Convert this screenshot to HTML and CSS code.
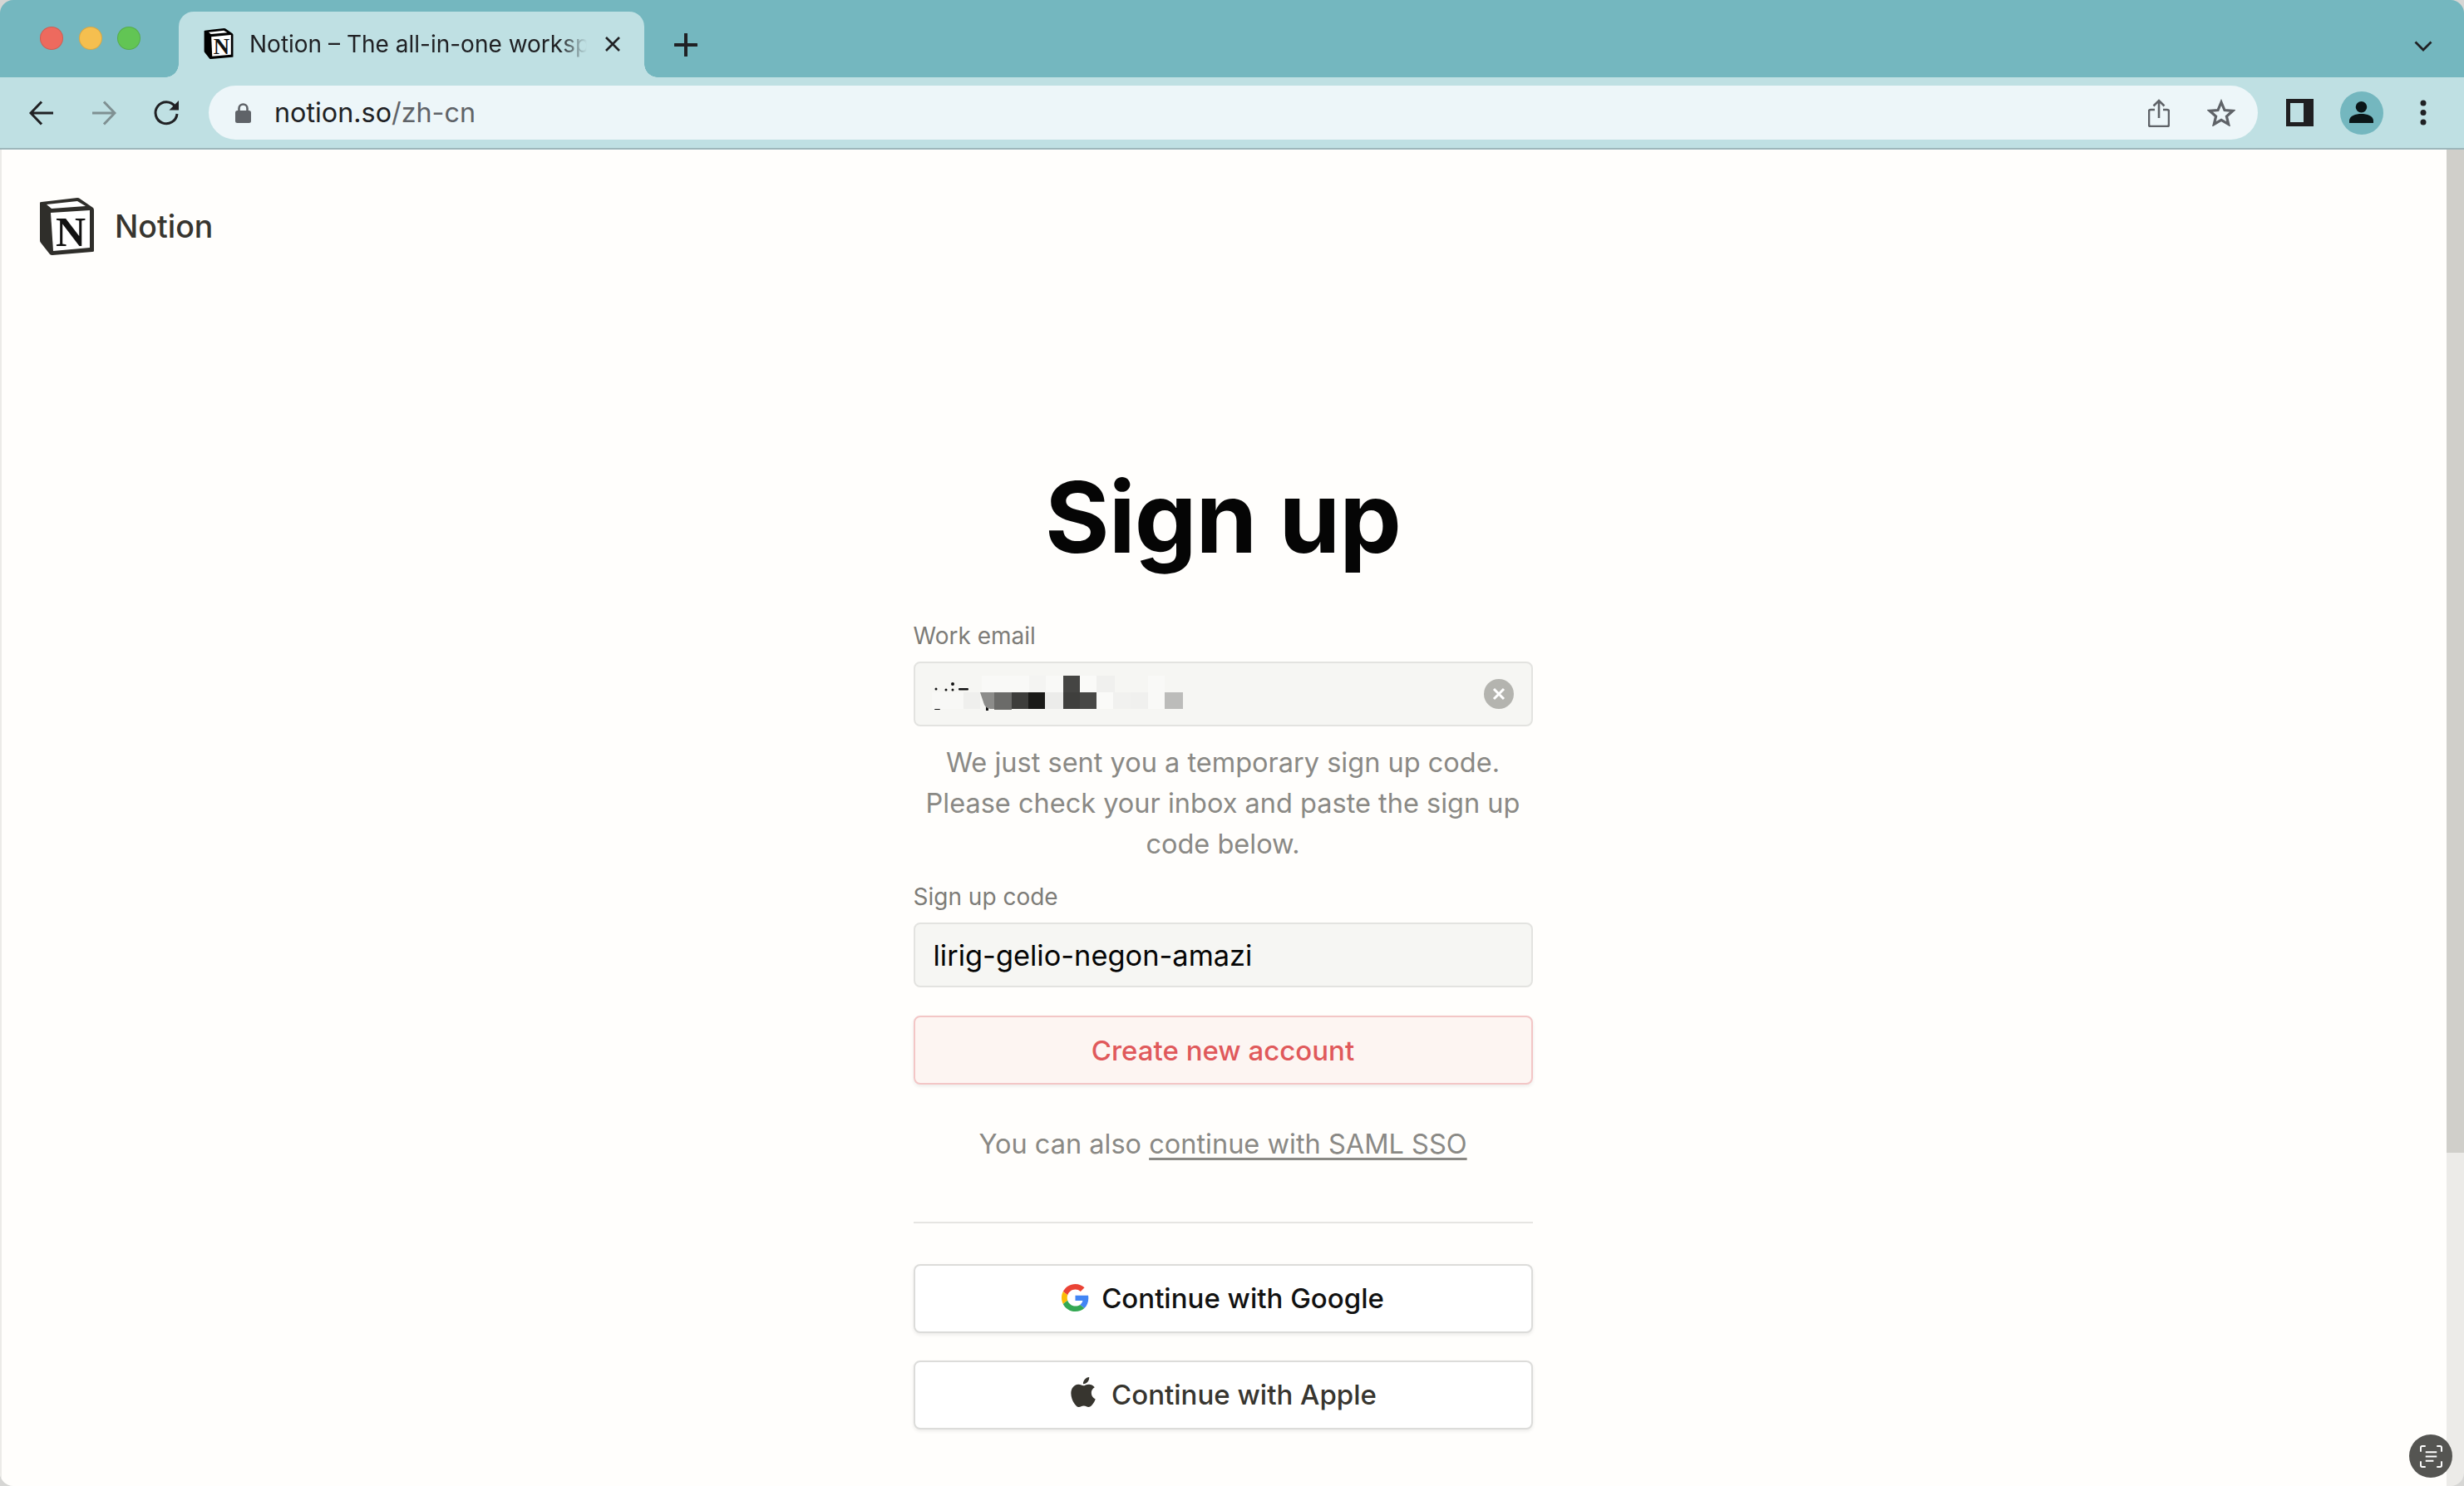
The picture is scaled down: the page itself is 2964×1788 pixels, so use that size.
FILE: index.html
```html
<!DOCTYPE html>
<html lang="en">
<head>
<meta charset="utf-8">
<title>Notion – The all-in-one workspace</title>
<link rel="stylesheet" href="styles.css">
</head>
<body>
<div class="window">
  <header class="tabstrip">
    <div class="lights">
      <span class="light red"></span><span class="light yellow"></span><span class="light green"></span>
    </div>
    <div class="tab">
      <svg class="favicon" viewBox="0 0 67 69">
        <path d="M2 6 Q2 5 4 5 L47 0 Q49 0 50 1 L66 12 Q67 13 67 15 L67 64 Q67 65 65 65 L17 69 Q15 69 14 68 L3 54 Q2 53 2 51 Z" fill="#000"/>
        <path d="M12 9 L46 5 L54 10 L17 13 Z" fill="#fff"/>
        <path d="M18 19 L62 15 L62 59 L20 63 Z" fill="#fff"/>
        <text x="41" y="57" text-anchor="middle" class="logo-n">N</text>
      </svg>
      <span class="tab-title">Notion – The all-in-one worksp</span>
      <svg class="tab-close" viewBox="0 0 20 20"><path d="M2 2 L18 18 M18 2 L2 18" stroke="#202124" stroke-width="2.6" fill="none"/></svg>
    </div>
    <svg class="new-tab" viewBox="0 0 28 28"><path d="M14 1 V27 M1 14 H27" stroke="#202124" stroke-width="4" stroke-linecap="round" fill="none"/></svg>
    <svg class="tab-menu" viewBox="0 0 22 13"><path d="M1.5 1.5 L11 11 L20.500 1.500" stroke="#202124" stroke-width="2.800" fill="none"/></svg>
  </header>

  <nav class="toolbar">
    <span class="tool"><svg class="icon-30" viewBox="0 0 30 30"><path d="M29 15 H3 M15 1.500 L2 15 L15 28.500" stroke="#202124" stroke-width="3" fill="none"/></svg></span>
    <span class="tool"><svg class="icon-30" viewBox="0 0 30 30"><path d="M1 15 H27 M15 1.500 L28 15 L15 28.500" stroke="#7f9092" stroke-width="3" fill="none"/></svg></span>
    <span class="tool"><svg class="icon-32" viewBox="0 0 32 32"><path d="M26.500 8 A13 13 0 1 0 29 17" stroke="#202124" stroke-width="3" fill="none"/><path d="M31 1 V12.500 H19.500 Z" fill="#202124"/></svg></span>
    <div class="omnibox">
      <svg class="lock" viewBox="0 0 19 24"><path d="M4.500 10 V6.500 a5 5 0 0 1 10 0 V10" stroke="#5f6368" stroke-width="2.600" fill="none"/><rect x="0" y="9" width="19" height="15" rx="2.500" fill="#5f6368"/></svg>
      <span class="url"><span class="url-host">notion.so</span>/zh-cn</span>
      <svg class="omni-share" viewBox="0 0 26 34"><path d="M8 13 H3 a2 2 0 0 0 -2 2 V31 a2 2 0 0 0 2 2 H23 a2 2 0 0 0 2 -2 V15 a2 2 0 0 0 -2 -2 H18" stroke="#5f6368" stroke-width="2.600" fill="none"/><path d="M13 23 V3 M6.500 8.500 L13 2 L19.500 8.500" stroke="#5f6368" stroke-width="2.600" fill="none"/></svg>
      <svg class="omni-star" viewBox="0 0 34 33"><path d="M17 4 L21 13.500 L31 14.300 L23.400 21 L25.700 30.500 L17 25.400 L8.300 30.500 L10.600 21 L3 14.300 L13 13.500 Z" stroke="#5f6368" stroke-width="3.200" stroke-linejoin="miter" fill="none"/></svg>
    </div>
    <div class="tools-right">
      <span class="tool-wide"><svg class="icon-33" viewBox="0 0 33 33"><rect width="33" height="33" fill="#1f1f21"/><rect x="5" y="5" width="16" height="23" fill="#bfe0e3"/></svg></span>
      <span class="avatar"><svg class="icon-avatar" viewBox="0 0 30 30"><circle cx="15" cy="8" r="7" fill="#0a1618"/><path d="M0 28 V25 C0 19 8 16.500 15 16.500 S30 19 30 25 V28 Z" fill="#0a1618"/></svg></span>
      <span class="tool-wide"><svg class="icon-dots" viewBox="0 0 8 31"><circle cx="4" cy="4" r="3.500" fill="#202124"/><circle cx="4" cy="15.500" r="3.500" fill="#202124"/><circle cx="4" cy="27" r="3.500" fill="#202124"/></svg></span>
    </div>
  </nav>

  <div class="viewport">
    <main class="page">
      <div class="brand">
        <svg class="brand-logo" viewBox="0 0 67 69">
          <path d="M2 6 Q2 5 4 5 L47 0 Q49 0 50 1 L66 12 Q67 13 67 15 L67 64 Q67 65 65 65 L17 69 Q15 69 14 68 L3 54 Q2 53 2 51 Z" fill="#2f2e2a"/>
          <path d="M10 8 L47 4 L57 10 L16 13 Z" fill="#fff"/>
          <path d="M15 18 L62 15 L62 60 L18 64 Z" fill="#fff"/>
          <text x="39" y="58" text-anchor="middle" class="logo-n">N</text>
        </svg>
        <span class="brand-name">Notion</span>
      </div>
      <section class="form">
        <h1 class="title">Sign up</h1>
        <label class="field-label">Work email</label>
        <div class="input">
          <svg class="mosaic" viewBox="0 0 340 70" aria-label="Redacted email address">
            <g fill="#111">
              <circle cx="25" cy="23" r="2"/><circle cx="5" cy="29" r="1.500"/><circle cx="17" cy="30" r="1.500"/><circle cx="25" cy="30" r="1.500"/><rect x="32" y="28" width="12" height="2.500" rx="1"/><rect x="3" y="52" width="7" height="2" rx="1"/><rect x="65" y="50" width="3" height="5"/>
            </g>
            <g>
              <rect x="60" y="13" width="57" height="20" fill="#f9f9f7"/>
              <rect x="117" y="13" width="20" height="20" fill="#f4f4f2"/>
              <rect x="137" y="13" width="21" height="20" fill="#f9f9f7"/>
              <rect x="158" y="13" width="20" height="20" fill="#454543"/>
              <rect x="178" y="13" width="20" height="20" fill="#fafaf8"/>
              <rect x="198" y="13" width="22" height="20" fill="#f0f0ee"/>
              <rect x="260" y="13" width="20" height="20" fill="#f9f9f7"/>
              <rect x="0" y="33" width="38" height="20" fill="#f8f8f6"/>
              <rect x="38" y="33" width="20" height="20" fill="#efefed"/>
              <path d="M58 33 H75 V53 H70 Q65 52 63 48 Z" fill="#8c8c8a"/>
              <rect x="75" y="33" width="21" height="21" fill="#6b6b69"/>
              <rect x="96" y="33" width="20" height="20" fill="#3d3d3b"/>
              <rect x="116" y="33" width="20" height="20" fill="#1a1a18"/>
              <rect x="136" y="33" width="22" height="20" fill="#ececea"/>
              <rect x="158" y="33" width="20" height="20" fill="#3f3f3d"/>
              <rect x="178" y="33" width="20" height="20" fill="#484846"/>
              <rect x="198" y="33" width="20" height="20" fill="#fafaf8"/>
              <rect x="218" y="33" width="22" height="20" fill="#f1f1ef"/>
              <rect x="240" y="33" width="20" height="20" fill="#f0f0ee"/>
              <rect x="260" y="33" width="20" height="20" fill="#f9f9f7"/>
              <rect x="280" y="33" width="22" height="20" fill="#bcbcba"/>
            </g>
          </svg>
          <svg class="clear" viewBox="0 0 36 36"><circle cx="18" cy="18" r="18" fill="#b4b4af"/><path d="M12 12 L24 24 M24 12 L12 24" stroke="#fff" stroke-width="3" fill="none"/></svg>
        </div>
        <p class="note">We just sent you a temporary sign up code. Please check your inbox and paste the sign up code below.</p>
        <label class="field-label">Sign up code</label>
        <div class="input"><span class="input-value">lirig-gelio-negon-amazi</span></div>
        <button class="btn btn-create">Create new account</button>
        <p class="sso">You can also <a class="sso-link">continue with SAML SSO</a></p>
        <hr class="divider">
        <button class="btn btn-social btn-google">
          <svg class="g-icon" viewBox="0 0 48 48">
            <path fill="#EA4335" d="M24 9.5c3.54 0 6.71 1.22 9.21 3.6l6.85-6.85C35.9 2.38 30.47 0 24 0 14.62 0 6.51 5.38 2.56 13.22l7.98 6.19C12.43 13.72 17.74 9.5 24 9.5z"/>
            <path fill="#4285F4" d="M46.98 24.55c0-1.57-.15-3.09-.38-4.55H24v9.02h12.94c-.58 2.96-2.26 5.48-4.78 7.18l7.73 6c4.51-4.18 7.09-10.36 7.09-17.65z"/>
            <path fill="#FBBC05" d="M10.53 28.59c-.48-1.45-.76-2.99-.76-4.59s.27-3.14.76-4.59l-7.98-6.19C.92 16.46 0 20.12 0 24c0 3.88.92 7.54 2.56 10.78l7.97-6.19z"/>
            <path fill="#34A853" d="M24 48c6.48 0 11.93-2.13 15.89-5.81l-7.73-6c-2.15 1.45-4.92 2.3-8.16 2.3-6.26 0-11.57-4.22-13.47-9.91l-7.98 6.19C6.51 42.62 14.62 48 24 48z"/>
          </svg>
          Continue with Google
        </button>
        <button class="btn btn-social btn-apple">
          <svg class="apple-icon" viewBox="2 0 20 24"><path fill="#37352f" d="M12.152 6.896c-.948 0-2.415-1.078-3.96-1.04-2.04.027-3.91 1.183-4.961 3.014-2.117 3.675-.546 9.103 1.519 12.09 1.013 1.454 2.208 3.09 3.792 3.039 1.52-.065 2.09-.987 3.935-.987 1.831 0 2.35.987 3.96.948 1.637-.026 2.676-1.48 3.676-2.948 1.156-1.688 1.636-3.325 1.662-3.415-.039-.013-3.182-1.221-3.22-4.857-.026-3.04 2.48-4.494 2.597-4.559-1.429-2.09-3.623-2.324-4.39-2.376-2-.156-3.675 1.09-4.61 1.09zM15.53 3.83c.843-1.012 1.4-2.427 1.245-3.83-1.207.052-2.662.805-3.532 1.818-.78.896-1.454 2.338-1.273 3.714 1.338.104 2.715-.688 3.559-1.701"/></svg>
          Continue with Apple
        </button>
      </section>
    </main>
    <div class="scrollbar"><div class="thumb"></div></div>
    <div class="scan">
      <svg class="scan-icon" viewBox="0 0 28 28">
        <path d="M1 8 V3 a2 2 0 0 1 2 -2 H7 M21 1 H25 a2 2 0 0 1 2 2 V8 M27 20 V25 a2 2 0 0 1 -2 2 H21 M7 27 H3 a2 2 0 0 1 -2 -2 V20" stroke="#fff" stroke-width="2" fill="none"/>
        <path d="M7 8.500 H21 M7 14 H21 M7 19.500 H17" stroke="#fff" stroke-width="2" fill="none"/>
      </svg>
    </div>
  </div>
</div>
</body>
</html>
```

FILE: styles.css
```css
* { box-sizing: border-box; }
html, body { margin: 0; height: 100%; overflow: hidden; background: #d6d6d4; }
body { font-family: Inter, "Liberation Sans", sans-serif; }
svg { display: block; flex: none; }
.logo-n { font-family: "Liberation Serif", serif; font-weight: 700; font-size: 50px; fill: #111; }

.window {
  height: 100%;
  display: flex;
  flex-direction: column;
  border-radius: 16px;
  overflow: hidden;
  position: relative;
}

/* tab strip */
.tabstrip {
  height: 93px;
  background: #74b7bf;
  display: flex;
  align-items: flex-end;
  padding-left: 48px;
  padding-right: 38px;
  flex: none;
}
.lights { display: flex; gap: 18.5px; align-self: flex-start; margin-top: 32px; }
.light { width: 28px; height: 28px; border-radius: 50%; border: 1px solid rgba(0,0,0,.12); }
.red { background: #ed6a5e; }
.yellow { background: #f5bf4f; }
.green { background: #62c554; }

.tab {
  width: 560px;
  height: 79px;
  margin-left: 46px;
  background: #bfe0e3;
  border-radius: 18px 18px 0 0;
  display: flex;
  align-items: center;
  padding: 0 29px;
  position: relative;
}
.tab::before, .tab::after {
  content: "";
  position: absolute;
  bottom: 0;
  width: 16px;
  height: 16px;
}
.tab::before { left: -16px; background: radial-gradient(circle at 0 0, #74b7bf 15.500px, #bfe0e3 16px); }
.tab::after { right: -16px; background: radial-gradient(circle at 100% 0, #74b7bf 15.500px, #bfe0e3 16px); }
.favicon { width: 37px; height: 37px; margin-top: -2px; }
.tab-title {
  margin-left: 19px;
  width: 406px;
  white-space: nowrap;
  font-size: 28px;
  color: #202124;
  margin-top: -2px;
  -webkit-mask-image: linear-gradient(to right, #000 92%, transparent 100%);
  mask-image: linear-gradient(to right, #000 92%, transparent 100%);
}
.tab-close { width: 20px; height: 20px; margin-left: 21px; margin-top: -2px; }
.new-tab { width: 28px; height: 28px; margin-left: 36px; align-self: flex-start; margin-top: 40px; }
.tab-menu { width: 22px; height: 13px; margin-left: auto; align-self: flex-start; margin-top: 49px; }

/* toolbar */
.toolbar {
  height: 87px;
  background: #bfe0e3;
  border-bottom: 2px solid #9cb6ba;
  display: flex;
  align-items: center;
  padding-left: 30px;
  padding-right: 23px;
  gap: 35px;
  flex: none;
}
.tool { width: 40px; display: flex; justify-content: center; }
.icon-30 { width: 30px; height: 30px; }
.icon-32 { width: 34px; height: 32px; }
.omnibox {
  flex: 1;
  height: 65px;
  margin-left: -4px;
  background: #edf6f9;
  border-radius: 33px;
  display: flex;
  align-items: center;
  padding-left: 32px;
  padding-right: 27px;
}
.lock { width: 19px; height: 24px; }
.url { margin-left: 28px; font-size: 32.300px; color: #5f6368; white-space: nowrap; }
.url-host { color: #202124; }
.omni-share { width: 26px; height: 34px; margin-left: auto; }
.omni-star { width: 34px; height: 33px; margin-left: 45px; }
.tools-right { display: flex; gap: 22.500px; align-items: center; margin-left: -10.500px; }
.tool-wide { width: 52px; display: flex; justify-content: center; }
.icon-33 { width: 33px; height: 33px; }
.avatar {
  width: 52px; height: 52px; border-radius: 50%;
  background: #74b7bf;
  display: flex; align-items: center; justify-content: center;
}
.icon-avatar { width: 29px; height: 29px; }
.icon-dots { width: 8px; height: 31px; }

/* viewport */
.viewport { flex: 1; display: flex; min-height: 0; position: relative; }
.page {
  flex: 1;
  min-width: 0;
  padding-right: 1px;
  background: #fffefc;
  box-shadow: inset 2px 0 0 #ecebe8;
  overflow: hidden;
}
.brand { display: flex; align-items: center; height: 69px; margin: 58px 0 0 46px; }
.brand-logo { width: 67px; height: 69px; }
.brand-name { margin-left: 25px; font-size: 37.500px; font-weight: 500; color: #37352f; }

.form {
  width: 745px;
  margin: 0 auto;
  display: flex;
  flex-direction: column;
}
.title {
  margin: 245px 0 0;
  height: 140px;
  line-height: 140px;
  font-size: 118.500px;
  font-weight: 700;
  letter-spacing: -1px;
  text-align: center;
  color: #050505;
}
.field-label {
  height: 42px;
  line-height: 42px;
  font-size: 28px;
  color: #7d7c78;
}
.title + .field-label { margin-top: 52px; }
.input {
  height: 78px;
  margin-top: 10px;
  background: #f6f6f3;
  border: 2px solid #e3e3e0;
  border-radius: 8px;
  display: flex;
  align-items: center;
  position: relative;
  padding-left: 22px;
}
.input-value { font-size: 34.400px; color: #050505; white-space: nowrap; }
.mosaic { width: 340px; height: 70px; position: absolute; left: 20px; top: 2px; }
.clear { width: 36px; height: 36px; margin-left: auto; margin-right: 21px; }
.note {
  margin: 19px 0 0;
  padding: 0 10px;
  font-size: 32.500px;
  line-height: 49px;
  text-align: center;
  color: #8a8985;
}
.note + .field-label { margin-top: 18px; }
.btn {
  display: flex;
  align-items: center;
  justify-content: center;
  width: 100%;
  height: 83px;
  border-radius: 8px;
  font-family: inherit;
  font-size: 33px;
  font-weight: 500;
  padding: 0;
}
.btn-create {
  margin-top: 34px;
  background: #fdf5f2;
  color: #e0595b;
  border: 2px solid #f3c6c6;
  box-shadow: 0 2px 4px rgba(15,15,15,.08);
}
.sso {
  margin: 47px 0 0;
  font-size: 32.500px;
  line-height: 49px;
  text-align: center;
  color: #8a8985;
}
.sso-link { text-decoration: underline; text-underline-offset: 5px; }
.divider { width: 100%; margin: 69px 0 0; border: 0; border-top: 2px solid #e6e5e2; }
.btn-social {
  background: #fff;
  border: 2px solid #dcdcda;
  box-shadow: 0 2px 4px rgba(15,15,15,.08);
  padding-bottom: 2px;
}
.btn-google { margin-top: 49px; color: #111; }
.btn-apple { margin-top: 33px; color: #37352f; }
.g-icon { width: 33px; height: 33px; margin-right: 15px; }
.apple-icon { width: 30px; height: 36px; margin-right: 19px; margin-left: 2px; margin-top: -6px; }

/* scrollbar */
.scrollbar { width: 21px; background: #ecebe8; flex: none; }
.thumb { height: 1207px; background: #d0cfca; }
.scan {
  position: absolute;
  right: 14px;
  bottom: 10px;
  width: 52px;
  height: 52px;
  border-radius: 50%;
  background: #555552;
  display: flex;
  align-items: center;
  justify-content: center;
}
.scan-icon { width: 27px; height: 27px; }
```
